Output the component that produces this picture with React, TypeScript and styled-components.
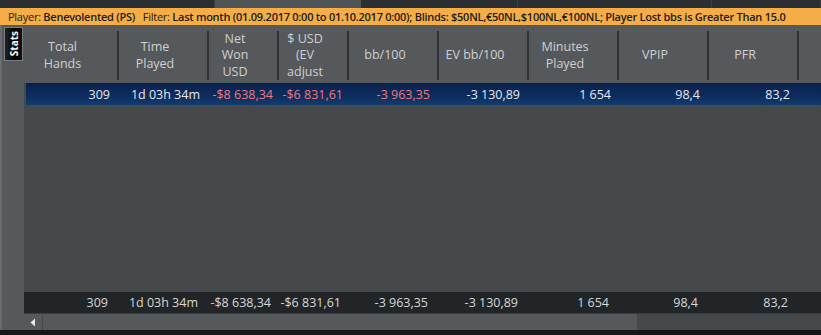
import React from "react";
import styled, { createGlobalStyle } from "styled-components";

const GlobalStyle = createGlobalStyle`
  html, body { margin: 0; padding: 0; background: #151719; overflow: hidden; }
  * { box-sizing: border-box; }
`;

const Frame = styled.div`
  width: 821px;
  height: 335px;
  display: flex;
  flex-direction: column;
  font-family: "Open Sans", "Noto Sans", sans-serif;
  background: #151719;
`;

const TopStrip = styled.div`
  height: 8px;
  display: flex;
  background: #2c2f32;
`;

const TopTab = styled.div<{ $w: number; $active?: boolean }>`
  width: ${(p) => p.$w}px;
  flex: none;
  background: ${(p) => (p.$active ? "#515457" : "#2c2f32")};
  border-right: 1px solid ${(p) => (p.$active ? "#515457" : "#3a3d40")};
`;

const FilterBar = styled.div`
  height: 17px;
  background: #f5ae47;
  color: #1b1b1b;
  font-size: 11px;
  letter-spacing: -0.26px;
  line-height: 17px;
  padding-left: 8px;
  white-space: nowrap;
  overflow: hidden;
  font-weight: 600;
`;

const Label = styled.span`
  font-weight: 400;
`;

const Main = styled.div`
  height: 305px;
  display: flex;
`;

const SidePanel = styled.div`
  width: 24px;
  flex: none;
  background: #56595c;
  border-left: 2px solid #6a6d70;
  padding: 2px 0 0 2px;
`;

const StatsTab = styled.div`
  width: 19px;
  height: 34px;
  background: linear-gradient(90deg, #222 0%, #000 60%, #111 100%);
  border: 1px solid #7a7d80;
  color: #ffffff;
  font-size: 10px;
  font-weight: 700;
  display: flex;
  align-items: center;
  justify-content: center;
`;

const StatsText = styled.span`
  writing-mode: vertical-rl;
  transform: rotate(180deg);
  line-height: 1;
`;

const TableArea = styled.div`
  flex: 1;
  display: flex;
  flex-direction: column;
  min-width: 0;
`;

const HeaderRow = styled.div`
  height: 58px;
  display: flex;
  background: #56595c;
`;

const HeaderCell = styled.div<{ $w: number }>`
  width: ${(p) => p.$w}px;
  flex: none;
  margin: 6px 0 3px;
  border-right: 2px solid #2f3235;
  display: flex;
  align-items: center;
  justify-content: center;
  padding-right: 16px;
  text-align: center;
  color: #cfd0d1;
  font-size: 12.5px;
  line-height: 16.5px;
  overflow: hidden;
`;

const Body = styled.div`
  flex: 1;
  background: #46494c;
  padding-left: 2px;
`;

const Row = styled.div<{ $variant: "selected" | "total" }>`
  display: flex;
  height: ${(p) => (p.$variant === "selected" ? 22 : 21)}px;
  align-items: center;
  background: ${(p) =>
    p.$variant === "selected"
      ? "linear-gradient(180deg, #0a214f 0%, #0d2d5e 60%, #123b6e 100%)"
      : "#222528"};
  color: ${(p) => (p.$variant === "selected" ? "#e6e8ec" : "#d6d7d8")};
  font-size: 12.5px;
  white-space: nowrap;
`;

const Cell = styled.div<{ $w: number; $neg?: boolean; $pr?: number }>`
  width: ${(p) => p.$w}px;
  flex: none;
  text-align: right;
  padding-right: ${(p) => p.$pr ?? 9}px;
  color: ${(p) => (p.$neg ? "#f07878" : "inherit")};
`;

const TotalWrap = styled.div`
  padding-left: 0;
`;

const ScrollBar = styled.div`
  height: 17px;
  display: flex;
  background: #45484b;
  border-top: 1px solid #3a3d40;
`;

const ArrowButton = styled.div`
  width: 18px;
  flex: none;
  background: #56595c;
  display: flex;
  align-items: center;
  justify-content: center;
  margin-right: 1px;
`;

const Thumb = styled.div`
  width: 594px;
  flex: none;
  background: #56595c;
`;

const BottomStrip = styled.div`
  height: 5px;
  background: #151719;
`;

const widths = [94, 90, 70, 70, 90, 90, 90, 90, 90, 60];

const headers: React.ReactNode[] = [
  <>Total<br />Hands</>,
  <>Time<br />Played</>,
  <>Net<br />Won<br />USD</>,
  <>$ USD<br />(EV<br />adjust</>,
  <>bb/100</>,
  <>EV bb/100</>,
  <>Minutes<br />Played</>,
  <>VPIP</>,
  <>PFR</>,
  <></>,
];

const values = [
  { v: "309" },
  { v: "1d 03h 34m" },
  { v: "-$8 638,34", neg: true, pr: 6 },
  { v: "-$6 831,61", neg: true, pr: 6 },
  { v: "-3 963,35", neg: true },
  { v: "-3 130,89" },
  { v: "1 654", pr: 8 },
  { v: "98,4" },
  { v: "83,2" },
];

export default function App() {
  return (
    <>
      <GlobalStyle />
      <Frame>
        <TopStrip>
          <TopTab $w={215} />
          <TopTab $w={146} $active />
          <TopTab $w={157} />
          <TopTab $w={194} />
          <TopTab $w={109} />
        </TopStrip>
        <FilterBar>
          <Label>Player: </Label>Benevolented (PS)&nbsp;&nbsp; <Label>Filter: </Label>
          Last month (01.09.2017 0:00 to 01.10.2017 0:00); Blinds: $50NL,€50NL,$100NL,€100NL; Player Lost bbs is Greater Than 15.0
        </FilterBar>
        <Main>
          <SidePanel>
            <StatsTab>
              <StatsText>Stats</StatsText>
            </StatsTab>
          </SidePanel>
          <TableArea>
            <HeaderRow>
              {headers.map((h, i) => (
                <HeaderCell key={i} $w={i === 0 ? 95 : widths[i]}>
                  <span>{h}</span>
                </HeaderCell>
              ))}
            </HeaderRow>
            <Body>
              <Row $variant="selected">
                {values.map((c, i) => (
                  <Cell key={i} $w={i === 0 ? 93 : widths[i]} $neg={c.neg} $pr={c.pr}>
                    {c.v}
                  </Cell>
                ))}
              </Row>
            </Body>
            <TotalWrap>
              <Row $variant="total">
                {values.map((c, i) => (
                  <Cell key={i} $w={i === 0 ? 94 : widths[i]} $pr={c.pr ? c.pr + 1 : 10}>
                    {c.v}
                  </Cell>
                ))}
              </Row>
            </TotalWrap>
            <ScrollBar>
              <ArrowButton>
                <svg width="6" height="9" viewBox="0 0 6 9">
                  <path d="M5 0.5 L0.5 4.5 L5 8.5 Z" fill="#e8e8e8" />
                </svg>
              </ArrowButton>
              <Thumb />
            </ScrollBar>
          </TableArea>
        </Main>
        <BottomStrip />
      </Frame>
    </>
  );
}
